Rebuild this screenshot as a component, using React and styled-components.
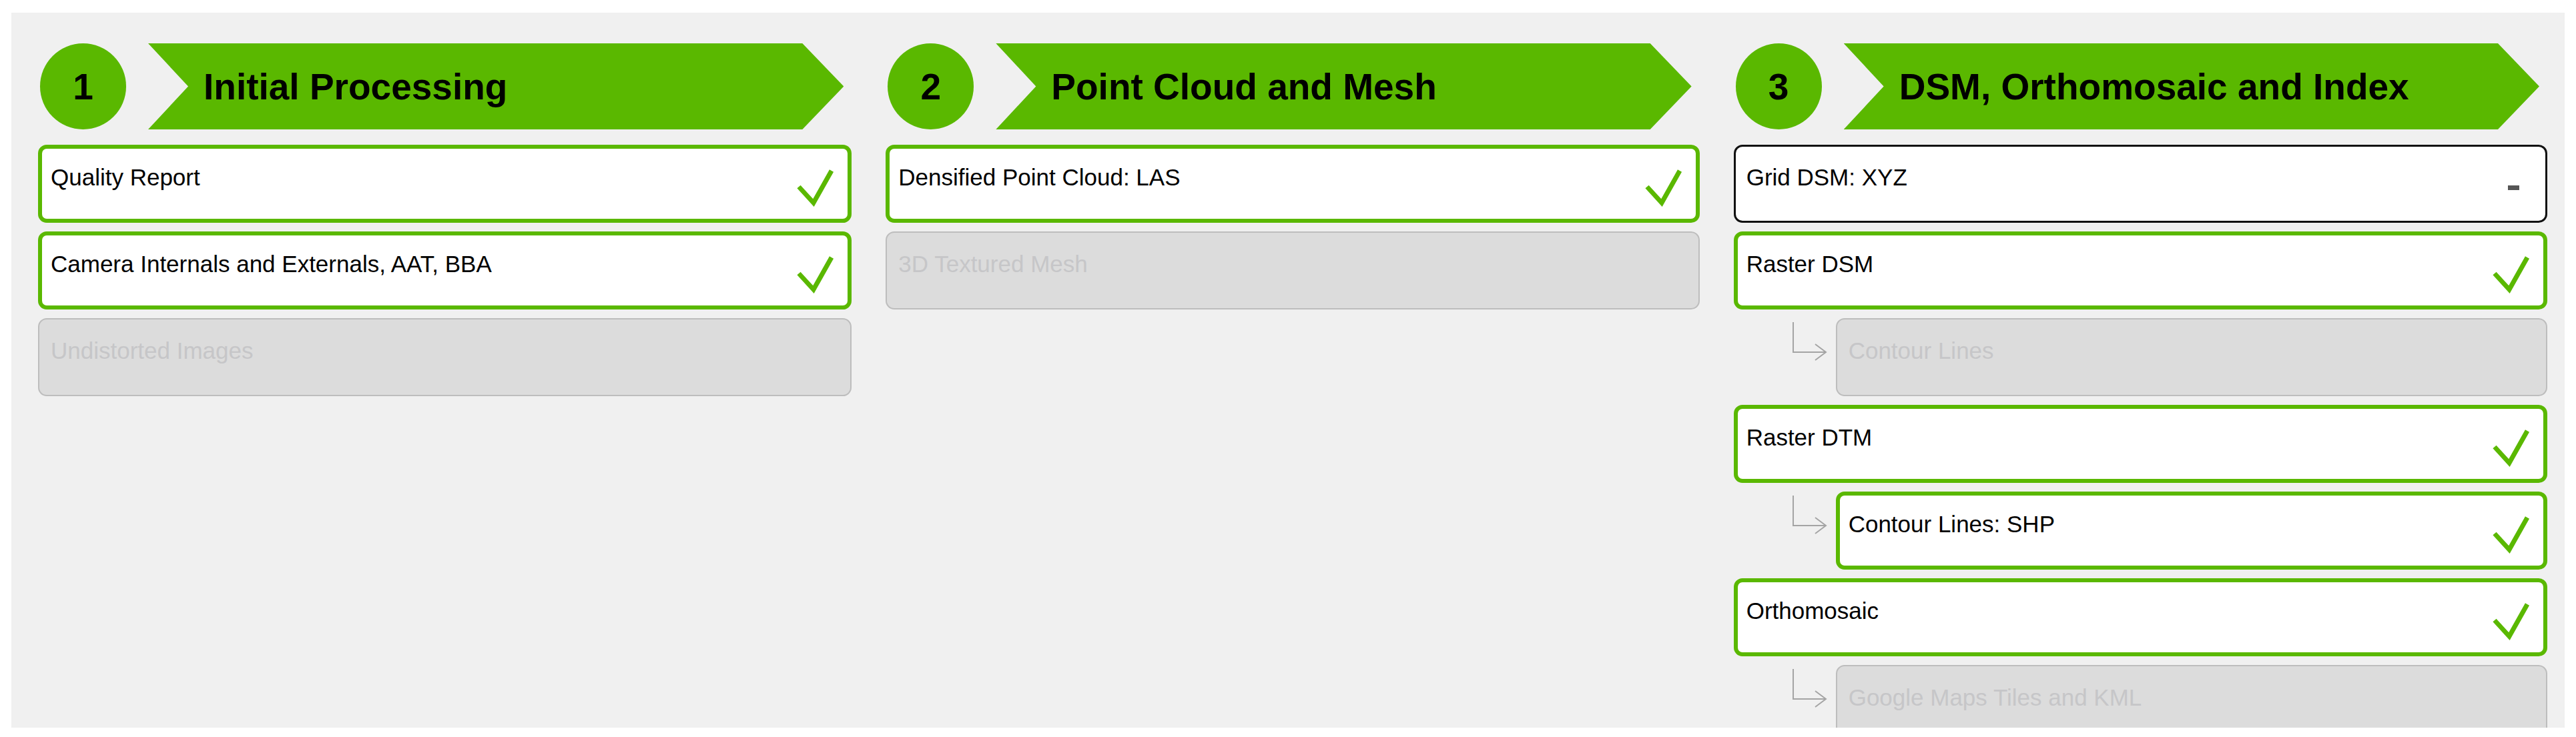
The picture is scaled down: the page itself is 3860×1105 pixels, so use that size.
import React from 'react';
import styled, { createGlobalStyle } from 'styled-components';

const green = '#5ab800';

const GlobalStyle = createGlobalStyle`
	html, body {
		margin: 0;
		padding: 0;
		background: #ffffff;
		font-family: 'Liberation Sans', Arial, sans-serif;
	}
`;

const Panel = styled.div`
	margin: 19px 17px 0 17px;
	height: 1072px;
	overflow: hidden;
	background: #f0f0f0;
	box-sizing: border-box;
	padding: 46px 26px 0 40px;
	display: grid;
	grid-template-columns: repeat(3, 1fr);
	column-gap: 51px;
	align-items: start;
`;

const Column = styled.div`
	display: flex;
	flex-direction: column;
	gap: 13px;
`;

const Header = styled.div`
	display: flex;
	align-items: center;
	height: 129px;
	margin-bottom: 10px;
	padding: 0 12px 0 3px;
`;

const StepCircle = styled.div`
	width: 129px;
	height: 129px;
	flex: 0 0 129px;
	border-radius: 50%;
	background: ${green};
	display: flex;
	align-items: center;
	justify-content: center;
	font-weight: bold;
	font-size: 55px;
	color: #000;
`;

const StepArrow = styled.div`
	flex: 1;
	height: 129px;
	margin-left: 33px;
	background: ${green};
	clip-path: polygon(0 0, calc(100% - 62px) 0, 100% 50%, calc(100% - 62px) 100%, 0 100%, 60px 50%);
	display: flex;
	align-items: center;
	padding-left: 83px;
	font-weight: bold;
	font-size: 55px;
	color: #000;
	white-space: nowrap;
`;

const borders = {
	done: 6,
	pending: 3,
	disabled: 2,
};

const Item = styled.div`
	flex: 1 0 auto;
	min-width: 0;
	height: 117px;
	box-sizing: border-box;
	border-radius: 13px;
	display: flex;
	align-items: flex-start;
	border: ${(p) => borders[p.$state]}px solid
		${(p) => (p.$state === 'done' ? green : p.$state === 'pending' ? '#111' : '#bdbdbd')};
	background: ${(p) => (p.$state === 'disabled' ? '#dcdcdc' : '#fff')};
	padding: ${(p) => 29 - borders[p.$state]}px ${(p) => 26 - borders[p.$state]}px 0
		${(p) => 19 - borders[p.$state]}px;
`;

const Label = styled.div`
	flex: 1;
	font-size: 35px;
	line-height: 40px;
	white-space: nowrap;
	color: ${(p) => (p.$muted ? '#c6c6c8' : '#000')};
`;

const Check = styled.svg`
	margin-top: 7px;
	flex: 0 0 auto;
`;

const Dash = styled.div`
	width: 17px;
	height: 7px;
	background: #555;
	margin: 32px 16px 0 0;
`;

const SubRow = styled.div`
	display: flex;
	align-items: stretch;
`;

const Connector = styled.svg`
	flex: 0 0 153px;
	width: 153px;
	height: 117px;
`;

const CheckIcon = () => (
	<Check width="56" height="58" viewBox="0 0 56 58">
		<polyline
			points="3,27 25,51 52,3"
			fill="none"
			stroke={green}
			strokeWidth="7"
			strokeLinejoin="miter"
		/>
	</Check>
);

const Status = ({ state }) => {
	if (state === 'done') return <CheckIcon />;
	if (state === 'pending') return <Dash />;
	return null;
};

const Entry = ({ label, state }) => (
	<Item $state={state}>
		<Label $muted={state === 'disabled'}>{label}</Label>
		<Status state={state} />
	</Item>
);

const SubEntry = (props) => (
	<SubRow>
		<Connector viewBox="0 0 153 117">
			<path d="M89 6 V51 H138" fill="none" stroke="#a4a4a4" strokeWidth="2" />
			<path d="M122 39 L138 51 L122 63" fill="none" stroke="#a4a4a4" strokeWidth="2" />
		</Connector>
		<Entry {...props} />
	</SubRow>
);

const steps = [
	{
		num: 1,
		title: 'Initial Processing',
		items: [
			{ label: 'Quality Report', state: 'done' },
			{ label: 'Camera Internals and Externals, AAT, BBA', state: 'done' },
			{ label: 'Undistorted Images', state: 'disabled' },
		],
	},
	{
		num: 2,
		title: 'Point Cloud and Mesh',
		items: [
			{ label: 'Densified Point Cloud: LAS', state: 'done' },
			{ label: '3D Textured Mesh', state: 'disabled' },
		],
	},
	{
		num: 3,
		title: 'DSM, Orthomosaic and Index',
		items: [
			{ label: 'Grid DSM: XYZ', state: 'pending' },
			{ label: 'Raster DSM', state: 'done' },
			{ label: 'Contour Lines', state: 'disabled', sub: true },
			{ label: 'Raster DTM', state: 'done' },
			{ label: 'Contour Lines: SHP', state: 'done', sub: true },
			{ label: 'Orthomosaic', state: 'done' },
			{ label: 'Google Maps Tiles and KML', state: 'disabled', sub: true },
		],
	},
];

export default function App() {
	return (
		<>
			<GlobalStyle />
			<Panel>
				{steps.map((step) => (
					<Column key={step.num}>
						<Header>
							<StepCircle>{step.num}</StepCircle>
							<StepArrow>{step.title}</StepArrow>
						</Header>
						{step.items.map((item) =>
							item.sub ? (
								<SubEntry key={item.label} label={item.label} state={item.state} />
							) : (
								<Entry key={item.label} label={item.label} state={item.state} />
							)
						)}
					</Column>
				))}
			</Panel>
		</>
	);
}
